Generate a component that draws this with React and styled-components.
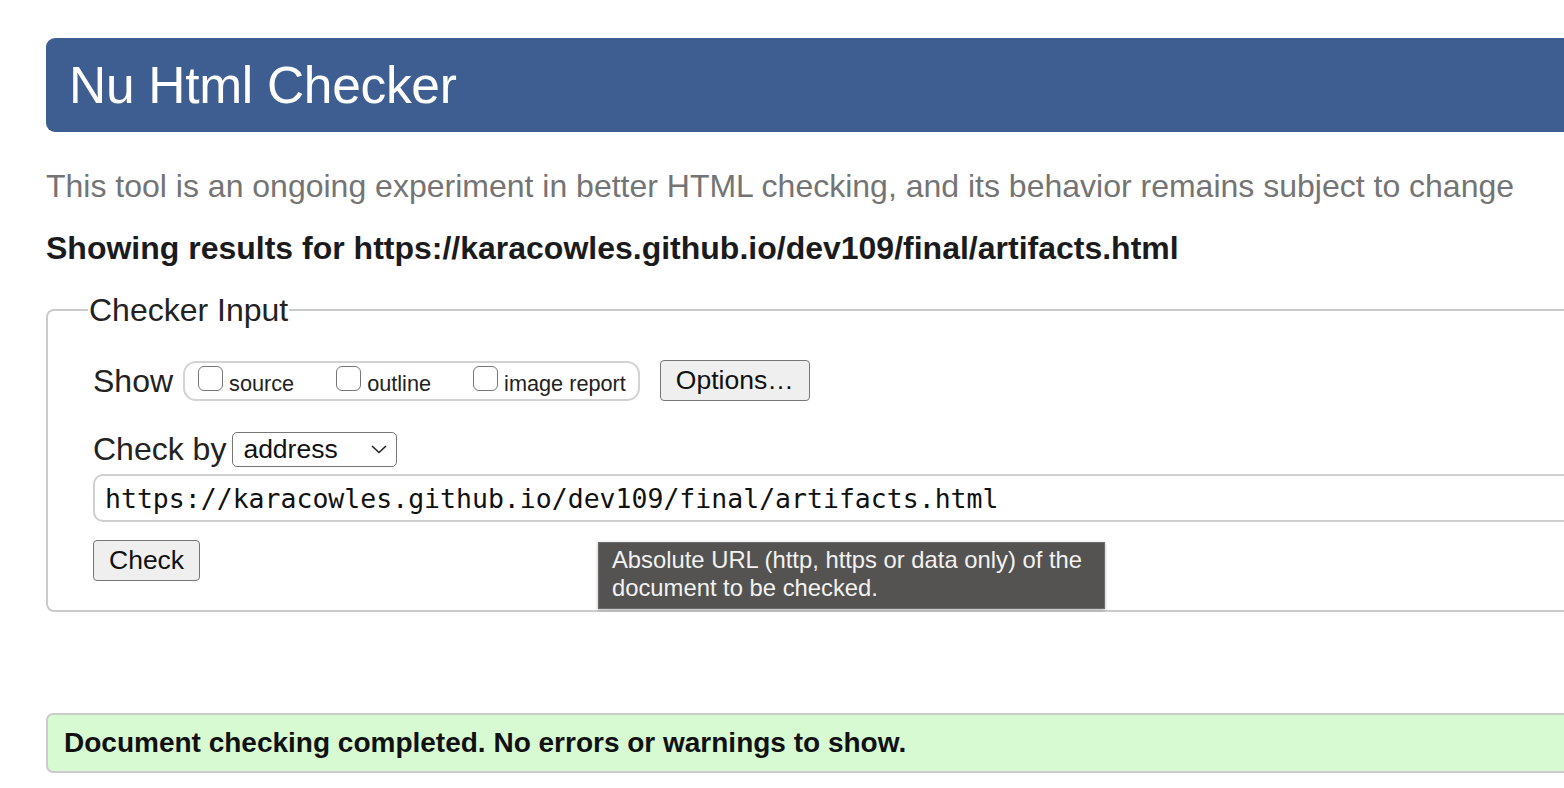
import styled, { createGlobalStyle } from "styled-components";

const Global = createGlobalStyle`
  html, body {
    margin: 0;
    padding: 0;
    background: #fff;
    overflow: hidden;
  }
  body {
    font-family: "Liberation Sans", Arial, Helvetica, sans-serif;
    color: #222;
  }
`;

const Page = styled.div`
  width: 1640px;
  padding: 38px 0 0 46px;
`;

const Banner = styled.header`
  height: 94px;
  background: #3e5e91;
  border-radius: 9px;
  display: flex;
  align-items: center;
  padding-left: 23px;
  h1 {
    margin: 0;
    color: #fff;
    font-size: 51.5px;
    font-weight: normal;
    letter-spacing: -0.3px;
  }
`;

const Intro = styled.p`
  margin: 37px 0 0;
  font-size: 32px;
  color: #747474;
  line-height: 34px;
`;

const Results = styled.h2`
  margin: 28px 0 0;
  font-size: 32px;
  font-weight: bold;
  color: #1b1b1d;
  line-height: 34px;
`;

const Fieldset = styled.fieldset`
  position: relative;
  margin: 28px 0 0;
  padding: 17px 0 29px 45px;
  border: 2px solid #cbcbcb;
  border-radius: 8px;
  min-width: 0;
`;

const Legend = styled.legend`
  font-size: 32px;
  padding: 0 1px;
  margin-left: -5px;
  color: #222;
  line-height: 34px;
`;

const Row = styled.div`
  display: flex;
  align-items: center;
  gap: ${(p) => p.$gap || 10}px;
  margin-top: ${(p) => p.$mt || 0}px;
  height: ${(p) => p.$h || 41}px;
`;

const Label = styled.span`
  font-size: 32px;
  color: #222;
  line-height: 36px;
`;

const CheckGroup = styled.div`
  display: flex;
  align-items: center;
  gap: 42px;
  height: 36px;
  padding: 0 12px 0 13px;
  border: 2px solid #d3d3d3;
  border-radius: 13px;
`;

const Opt = styled.label`
  display: flex;
  align-items: flex-end;
  font-size: 21.7px;
  color: #222;
  gap: 6px;
  line-height: 24px;
`;

const Box = styled.input.attrs({ type: "checkbox" })`
  appearance: none;
  margin: 0 0 5px;
  width: 25px;
  height: 25px;
  border: 1.5px solid #757575;
  border-radius: 6px;
  background: #fff;
  box-sizing: border-box;
`;

const Button = styled.button`
  font-family: "Liberation Sans", Arial, sans-serif;
  font-size: 26.5px;
  color: #111;
  background: #efefef;
  border: 1.5px solid #767676;
  border-radius: 4px;
  height: 41px;
  padding: 0 ${(p) => p.$px || 15}px;
  margin: 0 0 0 ${(p) => p.$ml || 0}px;
`;

const Select = styled.div`
  display: flex;
  align-items: center;
  justify-content: space-between;
  width: 165px;
  height: 35px;
  box-sizing: border-box;
  border: 1.5px solid #767676;
  border-radius: 5px;
  padding: 0 8px 0 10px;
  font-size: 26.5px;
  color: #111;
  background: #fff;
`;

const UrlField = styled.div`
  margin-top: 7px;
  height: 48px;
  box-sizing: border-box;
  border: 2px solid #cfcfcf;
  border-radius: 10px;
  display: flex;
  align-items: center;
  padding-left: 10px;
  font-family: "DejaVu Sans Mono", "Liberation Mono", monospace;
  font-size: 26.5px;
  color: #111;
`;

const Tooltip = styled.div`
  position: absolute;
  left: 550px;
  top: 215px;
  width: 507px;
  box-sizing: border-box;
  padding: 3px 13px 6px;
  background: #545351;
  border: 1px solid #6a6a6a;
  color: #f2f2f2;
  font-size: 23.8px;
  line-height: 28px;
  box-shadow: 0 1px 3px rgba(0, 0, 0, 0.3);
`;

const Success = styled.div`
  margin-top: 101px;
  height: 60px;
  box-sizing: border-box;
  background: #d7fad2;
  border: 2px solid #cbcbcb;
  border-radius: 7px;
  display: flex;
  align-items: center;
  padding-left: 16px;
  font-size: 28px;
  font-weight: bold;
  color: #111;
`;

function Chevron() {
  return (
    <svg width="18" height="12" viewBox="0 0 18 12">
      <path d="M2 3 L9 9.5 L16 3" fill="none" stroke="#222" strokeWidth="1.6" />
    </svg>
  );
}

export default function App() {
  return (
    <>
      <Global />
      <Page>
        <Banner>
          <h1>Nu Html Checker</h1>
        </Banner>
        <Intro>
          This tool is an ongoing experiment in better HTML checking, and its behavior remains subject to change
        </Intro>
        <Results>Showing results for https://karacowles.github.io/dev109/final/artifacts.html</Results>
        <Fieldset>
          <Legend>Checker Input</Legend>
          <Row $gap={10} $mt={16}>
            <Label>Show</Label>
            <CheckGroup>
              <Opt><Box />source</Opt>
              <Opt><Box />outline</Opt>
              <Opt><Box />image report</Opt>
            </CheckGroup>
            <Button $px={15} $ml={10}>Options…</Button>
          </Row>
          <Row $gap={6} $mt={30} $h={36}>
            <Label>Check by</Label>
            <Select>
              address
              <Chevron />
            </Select>
          </Row>
          <UrlField>https://karacowles.github.io/dev109/final/artifacts.html</UrlField>
          <Row $mt={18}>
            <Button $px={15}>Check</Button>
          </Row>
          <Tooltip>Absolute URL (http, https or data only) of the document to be checked.</Tooltip>
        </Fieldset>
        <Success>Document checking completed. No errors or warnings to show.</Success>
      </Page>
    </>
  );
}
